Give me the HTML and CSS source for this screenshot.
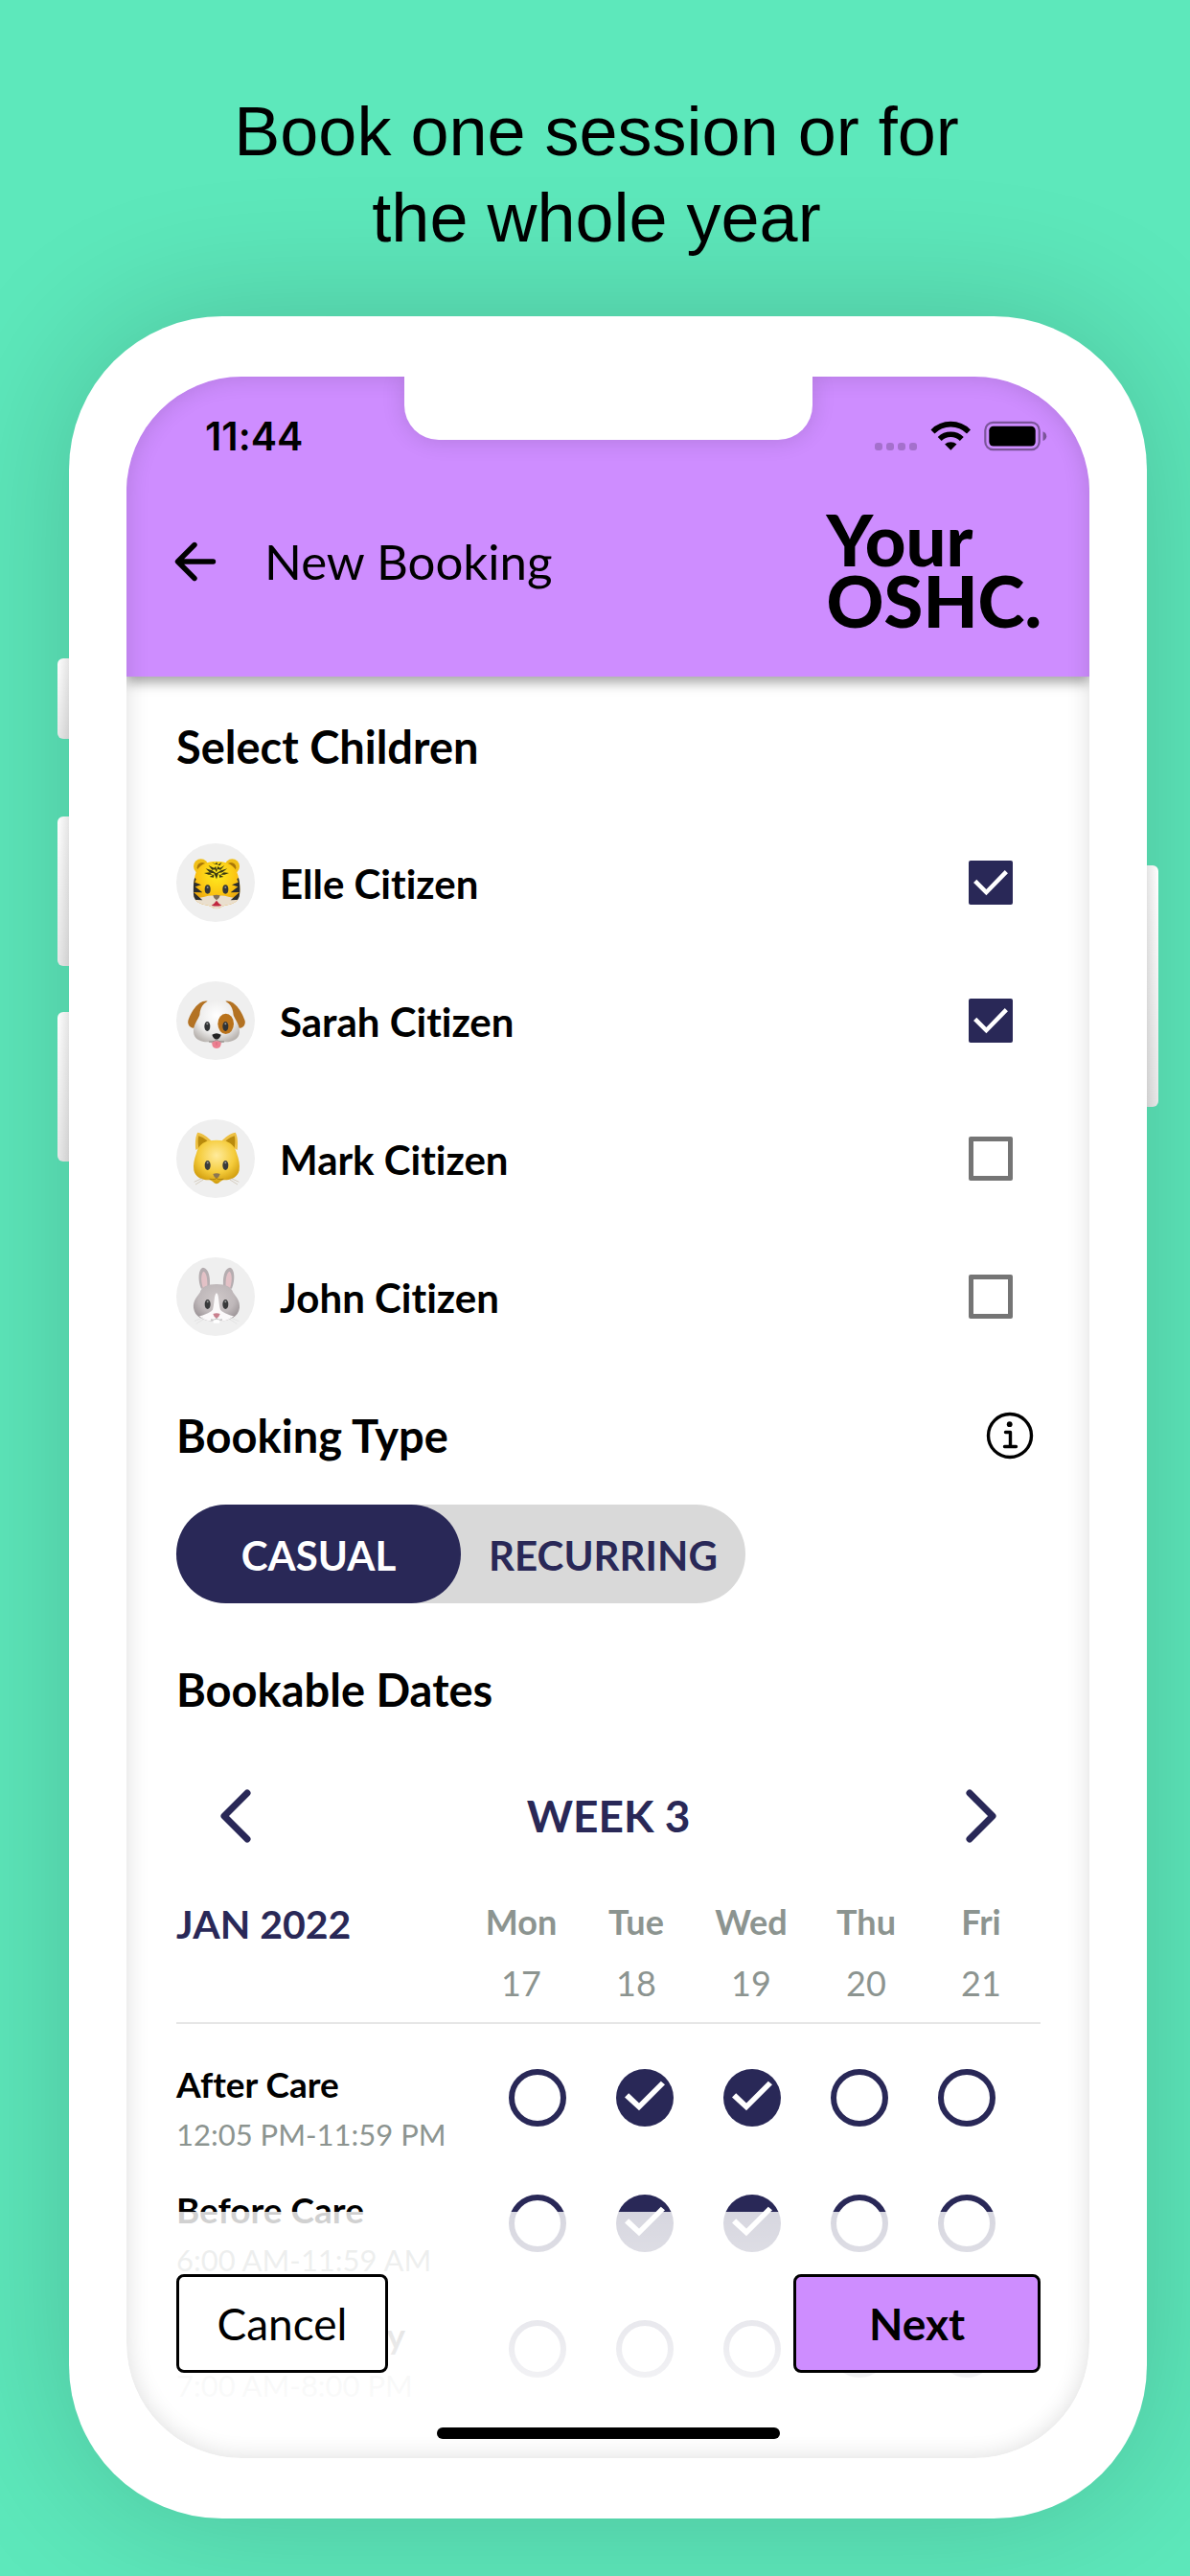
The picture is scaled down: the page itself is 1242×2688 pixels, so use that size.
FILE: index.html
```html
<!DOCTYPE html>
<html lang="en">
<head>
<meta charset="utf-8">
<meta name="viewport" content="width=device-width, initial-scale=1">
<title>New Booking</title>
<link rel="stylesheet" href="styles.css">
</head>
<body>
<h1 class="caption">Book one session or for<br>the whole year</h1>

<div class="phone">
  <span class="side-key side-key-mute"></span>
  <span class="side-key side-key-up"></span>
  <span class="side-key side-key-down"></span>
  <span class="side-key side-key-power"></span>

  <div class="screen">
    <header class="header">
      <div class="status-bar">
        <span class="clock">11:44</span>
        <svg class="status-icons" width="180" height="34" viewBox="0 0 180 34" aria-hidden="true">
          <g fill="#000" fill-opacity=".2">
            <rect x="0" y="24" width="8" height="8" rx="3"/>
            <rect x="12" y="24" width="8" height="8" rx="3"/>
            <rect x="24" y="24" width="8" height="8" rx="3"/>
            <rect x="36" y="24" width="8" height="8" rx="3"/>
          </g>
          <g fill="none" stroke="#000" stroke-width="5.6">
            <path d="M60.500 12.400a26.500 26.500 0 0 1 37.500 0"/>
            <path d="M67.700 20a16.600 16.600 0 0 1 23.100 0"/>
          </g>
          <path d="M79.300 31.800l-6.200-6.200a9.200 9.200 0 0 1 12.400 0z"/>
          <rect x="115.300" y="2.900" width="56.400" height="28.200" rx="8" fill="none" stroke="#000" stroke-opacity=".4" stroke-width="2.200"/>
          <rect x="119.300" y="6.700" width="48.400" height="20.800" rx="4.500"/>
          <path d="M175.500 12.300c5 2 5 8 0 9.800z" fill-opacity=".4"/>
        </svg>
        <span class="notch"></span>
      </div>
      <div class="app-bar">
        <button class="icon-button back" type="button" aria-label="Back">
          <svg width="44" height="42" viewBox="0 0 44 42" fill="none" stroke="#000" stroke-width="5.400" stroke-linecap="round" stroke-linejoin="round"><path d="M40.500 21H4M21 3.500L3.500 21L21 38.500"/></svg>
        </button>
        <h2 class="app-title">New Booking</h2>
        <div class="logo">Your<br>OSHC.</div>
      </div>
    </header>

    <main class="content">
      <h3 class="section-title">Select Children</h3>
      <ul class="children">
        <li><label class="child">
          <svg class="avatar" viewBox="0 0 246 246" aria-hidden="true">
            <defs>
              <radialGradient id="tiger" cx=".5" cy=".3" r=".65"><stop offset="0" stop-color="#ffee20"/><stop offset=".6" stop-color="#fbc312"/><stop offset="1" stop-color="#e0960c"/></radialGradient>
              <clipPath id="tigerHead"><path d="M126 56C98 56 66 66 59 100C54 122 52 142 54 160C56 184 78 192 99 194C112 197 116 205 126 205C136 205 140 197 153 194C174 192 196 184 198 160C202 142 198 122 193 100C186 66 154 56 126 56Z"/></clipPath>
            </defs>
            <circle cx="123" cy="123" r="123" fill="#efefef"/>
            <circle cx="77" cy="72" r="23" fill="#f0bf18"/><circle cx="175" cy="72" r="23" fill="#f0bf18"/>
            <circle cx="81" cy="76" r="16" fill="#a87708"/><circle cx="171" cy="76" r="16" fill="#a87708"/>
            <g clip-path="url(#tigerHead)">
              <rect x="48" y="50" width="158" height="160" fill="url(#tiger)"/>
              <path d="M48 168C78 178 99 157 126 166C153 157 174 178 204 168V210H48Z" fill="#eadfce"/>
              <path d="M48 100L62 112L58 122L78 130L59 136L82 154L54 153L82 178L48 176ZM204 100L190 112L194 122L174 130L193 136L170 154L198 153L170 178L204 176Z" fill="#2b2c2d"/>
            </g>
            <path d="M110 59L123 67L126 58L130 67L143 59L136 70ZM101 69L118 77L124 72L126 83L130 72L137 77L151 69L139 83L129 81L126 91L121 82L112 83ZM92 79L112 85L125 94L140 85L160 79L144 91L132 93L126 112L118 94L106 92ZM87 93L103 91L114 98L101 98ZM165 93L149 91L138 98L151 98ZM104 105L118 97L117 107ZM148 105L134 97L135 107Z" fill="#3a3913"/>
            <ellipse cx="98" cy="144" rx="9" ry="14" fill="#343638"/><ellipse cx="154" cy="144" rx="9" ry="14" fill="#343638"/>
            <circle cx="98" cy="138" r="3" fill="#8c8e90"/><circle cx="154" cy="138" r="3" fill="#8c8e90"/>
            <path d="M115 163Q126 160 137 163Q136 172 126 178Q116 172 115 163Z" fill="#84705c"/>
            <path d="M110 194Q120 188 126 179Q132 188 142 194Q126 199 110 194Z" fill="#c1273f"/>
          </svg>
          <span class="child-name">Elle Citizen</span>
          <input class="box" type="checkbox" checked>
        </label></li>
        <li><label class="child">
          <svg class="avatar" viewBox="0 0 246 246" aria-hidden="true">
            <defs><radialGradient id="dog" cx=".5" cy=".35" r=".65"><stop offset="0" stop-color="#fff"/><stop offset=".65" stop-color="#ebeae9"/><stop offset="1" stop-color="#b9b4b0"/></radialGradient></defs>
            <circle cx="123" cy="123" r="123" fill="#efefef"/>
            <path d="M98 62C70 56 44 98 37 124C34 140 50 152 62 143C78 128 76 86 98 62Z" fill="#b37223"/>
            <path d="M154 62C182 56 208 98 215 124C218 140 202 152 190 143C174 128 176 86 154 62Z" fill="#b37223"/>
            <path d="M126 58C92 58 75 74 73 106C68 120 52 138 54 160C56 184 80 191 101 190Q114 196 126 196Q138 196 151 190C172 191 196 184 198 160C200 138 184 120 179 106C177 74 160 58 126 58Z" fill="url(#dog)"/>
            <ellipse cx="155" cy="133" rx="25" ry="32" fill="#b9721b"/>
            <ellipse cx="97" cy="141" rx="9" ry="15" fill="#303234"/><ellipse cx="154" cy="141" rx="9" ry="15" fill="#303234"/>
            <circle cx="97" cy="133" r="3" fill="#999"/><circle cx="154" cy="133" r="3" fill="#999"/>
            <path d="M112 167Q126 158 140 167Q136 180 126 182Q116 180 112 167Z" fill="#222"/>
            <path d="M102 189Q124 190 126 181Q128 190 150 189" fill="none" stroke="#8b8682" stroke-width="3"/>
            <path d="M112 191Q126 183 140 191Q142 209 126 210Q110 209 112 191Z" fill="#ec7f90"/>
            <path d="M126 190V200" stroke="#cb5d72" stroke-width="2"/>
          </svg>
          <span class="child-name">Sarah Citizen</span>
          <input class="box" type="checkbox" checked>
        </label></li>
        <li><label class="child">
          <svg class="avatar" viewBox="0 0 246 246" aria-hidden="true">
            <defs><radialGradient id="cat" cx=".5" cy=".35" r=".65"><stop offset="0" stop-color="#ffeb9c"/><stop offset=".6" stop-color="#f5cc3b"/><stop offset="1" stop-color="#cf9a0b"/></radialGradient></defs>
            <circle cx="123" cy="123" r="123" fill="#efefef"/>
            <path d="M61 96C58 70 61 50 67 41C84 44 100 57 110 68ZM191 96C194 70 191 50 185 41C168 44 152 57 142 68Z" fill="#edc043"/>
            <path d="M70 91Q66 66 70 52Q87 57 97 67ZM182 91Q186 66 182 52Q165 57 155 67Z" fill="#b98a0d"/>
            <path d="M126 65C91 65 70 76 63 106C56 126 52 142 55 160C60 182 82 191 104 190C114 192 119 202 126 202C133 202 138 192 148 190C170 191 192 182 197 160C200 142 196 126 189 106C182 76 161 65 126 65Z" fill="url(#cat)"/>
            <ellipse cx="98" cy="144" rx="9" ry="15" fill="#3a3b3a"/><ellipse cx="154" cy="144" rx="9" ry="15" fill="#3a3b3a"/>
            <circle cx="98" cy="136" r="3" fill="#999"/><circle cx="154" cy="136" r="3" fill="#999"/>
            <path d="M115 171Q126 167 137 171Q135 181 126 185Q117 181 115 171Z" fill="#8b7653"/>
            <path d="M104 187Q122 190 126 184Q130 190 148 187" fill="none" stroke="#a97c0c" stroke-width="3"/>
            <path d="M82 184L56 196M84 189L60 204M170 184L196 196M168 189L192 204" stroke="#b9a98c" stroke-width="1.500"/>
          </svg>
          <span class="child-name">Mark Citizen</span>
          <input class="box" type="checkbox">
        </label></li>
        <li><label class="child">
          <svg class="avatar" viewBox="0 0 246 246" aria-hidden="true">
            <defs><radialGradient id="rabbit" cx=".5" cy=".4" r=".65"><stop offset="0" stop-color="#cfc8c9"/><stop offset=".6" stop-color="#bfb8ba"/><stop offset="1" stop-color="#978f92"/></radialGradient></defs>
            <circle cx="123" cy="123" r="123" fill="#efefef"/>
            <path d="M78 98C66 68 70 34 84 32C102 34 108 66 104 94ZM174 98C186 68 182 34 168 32C150 34 144 66 148 94Z" fill="#b5adb0"/>
            <path d="M84 98C74 66 80 46 86 44C96 50 98 72 97 94ZM168 98C178 66 172 46 166 44C156 50 154 72 155 94Z" fill="#e3c1c6"/>
            <path d="M126 84C98 84 80 92 74 110C64 124 52 136 54 158C58 186 84 200 126 200C168 200 194 186 198 158C200 136 188 124 178 110C172 92 154 84 126 84Z" fill="url(#rabbit)"/>
            <path d="M126 112C134 116 132 144 138 164C150 176 166 180 180 184C166 198 150 201 126 201C102 201 86 198 72 184C86 180 102 176 114 164C120 144 118 116 126 112Z" fill="#fbf9fa"/>
            <ellipse cx="98" cy="147" rx="9" ry="15" fill="#38393a"/><ellipse cx="154" cy="147" rx="9" ry="15" fill="#38393a"/>
            <circle cx="98" cy="139" r="3" fill="#999"/><circle cx="154" cy="139" r="3" fill="#999"/>
            <path d="M115 177Q126 172 137 177Q134 188 126 191Q118 188 115 177Z" fill="#c9808e"/>
            <path d="M108 195Q124 198 126 190Q128 198 144 195" fill="none" stroke="#aaa" stroke-width="3"/>
            <rect x="116" y="196" width="20" height="10" rx="3" fill="#fff"/>
            <path d="M84 188L56 200M88 192L62 208M168 188L196 200M164 192L190 208" stroke="#ddd" stroke-width="2"/>
          </svg>
          <span class="child-name">John Citizen</span>
          <input class="box" type="checkbox">
        </label></li>
      </ul>

      <div class="section-row">
        <h3 class="section-title">Booking Type</h3>
        <button class="icon-button info" type="button" aria-label="About booking types">
          <svg width="50" height="50" viewBox="0 0 50 50" fill="none" stroke="#000" stroke-width="3.400"><circle cx="25" cy="25" r="22.500"/><circle cx="24.700" cy="13.200" r="2.900" fill="#000" stroke="none"/><path d="M20.500 21.500H25.500V36.500M19.500 36.500H31.500" stroke-linecap="round" stroke-linejoin="round"/></svg>
        </button>
      </div>
      <div class="toggle">
        <button class="toggle-option toggle-active" type="button" aria-pressed="true">CASUAL</button>
        <button class="toggle-option" type="button" aria-pressed="false">RECURRING</button>
      </div>

      <h3 class="section-title dates-title">Bookable Dates</h3>
      <div class="week-nav">
        <button class="icon-button" type="button" aria-label="Previous week">
          <svg width="32" height="56" viewBox="0 0 32 56" fill="none" stroke="#292857" stroke-width="7" stroke-linecap="round" stroke-linejoin="round"><path d="M28 4L4 28L28 52"/></svg>
        </button>
        <span class="week-label">WEEK 3</span>
        <button class="icon-button" type="button" aria-label="Next week">
          <svg width="32" height="56" viewBox="0 0 32 56" fill="none" stroke="#292857" stroke-width="7" stroke-linecap="round" stroke-linejoin="round"><path d="M4 4L28 28L4 52"/></svg>
        </button>
      </div>

      <table class="sessions">
        <thead>
          <tr>
            <th class="month" scope="col">JAN 2022</th>
            <th class="day" scope="col">Mon<span class="date">17</span></th>
            <th class="day" scope="col">Tue<span class="date">18</span></th>
            <th class="day" scope="col">Wed<span class="date">19</span></th>
            <th class="day" scope="col">Thu<span class="date">20</span></th>
            <th class="day" scope="col">Fri<span class="date">21</span></th>
          </tr>
        </thead>
        <tbody>
          <tr>
            <th class="session" scope="row">After Care<span class="hours">12:05 PM-11:59 PM</span></th>
            <td><input class="dot" type="checkbox" aria-label="After Care, Monday 17"></td>
            <td><input class="dot" type="checkbox" aria-label="After Care, Tuesday 18" checked></td>
            <td><input class="dot" type="checkbox" aria-label="After Care, Wednesday 19" checked></td>
            <td><input class="dot" type="checkbox" aria-label="After Care, Thursday 20"></td>
            <td><input class="dot" type="checkbox" aria-label="After Care, Friday 21"></td>
          </tr>
          <tr>
            <th class="session" scope="row">Before Care<span class="hours">6:00 AM-11:59 AM</span></th>
            <td><input class="dot" type="checkbox" aria-label="Before Care, Monday 17"></td>
            <td><input class="dot" type="checkbox" aria-label="Before Care, Tuesday 18" checked></td>
            <td><input class="dot" type="checkbox" aria-label="Before Care, Wednesday 19" checked></td>
            <td><input class="dot" type="checkbox" aria-label="Before Care, Thursday 20"></td>
            <td><input class="dot" type="checkbox" aria-label="Before Care, Friday 21"></td>
          </tr>
          <tr>
            <th class="session" scope="row">Pupil Free Day<span class="hours">7:00 AM-8:00 PM</span></th>
            <td><input class="dot" type="checkbox" aria-label="Pupil Free Day, Monday 17"></td>
            <td><input class="dot" type="checkbox" aria-label="Pupil Free Day, Tuesday 18"></td>
            <td><input class="dot" type="checkbox" aria-label="Pupil Free Day, Wednesday 19"></td>
            <td><input class="dot" type="checkbox" aria-label="Pupil Free Day, Thursday 20"></td>
            <td><input class="dot" type="checkbox" aria-label="Pupil Free Day, Friday 21"></td>
          </tr>
        </tbody>
      </table>
    </main>

    <footer class="actions">
      <div class="action-row">
        <button class="button button-cancel" type="button">Cancel</button>
        <button class="button button-next" type="button">Next</button>
      </div>
      <span class="home-indicator"></span>
    </footer>
  </div>
</div>
</body>
</html>
```
FILE: styles.css
```css
* {
  box-sizing: border-box;
}

body {
  margin: 0;
  padding: 92px 45px 60px 72px;
  background: #5de8bb;
  color: #000;
  font-family: Lato, "Open Sans", sans-serif;
  font-variant-ligatures: none;
  overflow-x: hidden;
}

h1, h2, h3, ul {
  margin: 0;
  padding: 0;
  font-weight: 400;
}

button {
  border: 0;
  padding: 0;
  background: none;
  color: inherit;
  font-family: inherit;
  cursor: pointer;
}

svg {
  display: block;
}

.caption {
  position: relative;
  z-index: 1;
  margin: 0 0 58px;
  padding-right: 24px;
  font-family: "Liberation Sans", Arial, sans-serif;
  font-size: 72px;
  line-height: 90px;
  text-align: center;
}

/* Device frame */
.phone {
  position: relative;
  padding: 63px 60px;
  border-radius: 160px;
  background: #fff;
  box-shadow: 0 0 150px rgba(0, 0, 0, 0.18);
}

.side-key {
  position: absolute;
  left: -12px;
  width: 12px;
  border-radius: 6px 0 0 6px;
  background:
    linear-gradient(to left, rgba(0, 0, 0, 0.1), rgba(0, 0, 0, 0)),
    linear-gradient(#fff, #e8e8e8);
}

.side-key-mute {
  top: 357px;
  height: 84px;
}

.side-key-up {
  top: 522px;
  height: 156px;
}

.side-key-down {
  top: 726px;
  height: 156px;
}

.side-key-power {
  top: 573px;
  right: -12px;
  left: auto;
  height: 252px;
  border-radius: 0 6px 6px 0;
  background:
    linear-gradient(to right, rgba(0, 0, 0, 0.1), rgba(0, 0, 0, 0)),
    linear-gradient(#fff, #e8e8e8);
}

.screen {
  position: relative;
  overflow: hidden;
  border-radius: 120px;
  background: #fff;
}

.screen::after {
  content: "";
  position: absolute;
  inset: 0;
  z-index: 2;
  border-radius: 120px;
  box-shadow: inset 0 0 24px rgba(0, 0, 0, 0.14);
  pointer-events: none;
}

/* Header */
.header {
  position: relative;
  background: #ce8dff;
  box-shadow: 0 6px 12px rgba(0, 0, 0, 0.36);
}

.status-bar {
  display: flex;
  align-items: center;
  justify-content: space-between;
  height: 124px;
  padding: 0 44px 0 82px;
}

.clock {
  font-family: Inter, sans-serif;
  font-size: 41px;
  font-weight: 600;
}

.notch {
  position: absolute;
  top: 0;
  right: 0;
  left: 0;
  z-index: 3;
  width: 426px;
  height: 66px;
  margin: 0 auto;
  border-radius: 0 0 36px 36px;
  background: #fff;
  box-shadow: 0 0 24px rgba(0, 0, 0, 0.14);
}

.app-bar {
  display: flex;
  align-items: flex-start;
  height: 189px;
  padding: 14px 50px 0 50px;
}

.icon-button {
  display: flex;
  align-items: center;
  justify-content: center;
}

.back {
  height: 110px;
}

.app-title {
  flex: 1;
  padding-left: 50px;
  font-size: 51px;
  line-height: 110px;
}

.logo {
  font-size: 74px;
  font-weight: 900;
  line-height: 64px;
}

/* Content */
.content {
  padding: 45px 51px 49px 52px;
}

.section-title {
  font-size: 47px;
  font-weight: 700;
  line-height: 56px;
}

.children {
  padding: 42px 0 45px;
  list-style: none;
}

.child {
  display: flex;
  align-items: center;
  height: 144px;
  padding-right: 29px;
}

.avatar {
  width: 82px;
  height: 82px;
}

.child-name {
  flex: 1;
  padding: 2px 0 0 26px;
  font-size: 42px;
  font-weight: 700;
}

.box,
.dot {
  position: relative;
  display: block;
  margin: 0;
  appearance: none;
}

.box {
  width: 46px;
  height: 46px;
  border: 5px solid #757575;
  border-radius: 2px;
}

.box:checked,
.dot:checked {
  border: 0;
  background: #292857;
}

.box:checked::before,
.dot:checked::before {
  content: "";
  display: block;
  height: 100%;
  background: #fff;
}

.box:checked::before {
  clip-path: polygon(11% 50%, 18% 43%, 40% 65%, 82% 22%, 89% 29%, 40% 79%);
}

.section-row {
  display: flex;
  align-items: center;
  justify-content: space-between;
  padding-right: 7px;
}

.toggle {
  display: grid;
  grid-template-columns: 1fr 1fr;
  width: 594px;
  margin-top: 44px;
  border-radius: 52px;
  background: #d9d9d9;
}

.toggle-option {
  height: 103px;
  padding-top: 2px;
  border-radius: 52px;
  color: #292857;
  font-size: 42px;
  font-weight: 700;
}

.toggle-active {
  background: #292857;
  color: #fff;
}

.dates-title {
  margin-top: 62px;
}

.week-nav {
  display: flex;
  align-items: center;
  justify-content: space-between;
  margin-top: 76px;
  padding: 0 46px;
}

.week-label {
  color: #292857;
  font-size: 46px;
  font-weight: 700;
  line-height: 56px;
}

/* Session table */
.sessions,
.sessions thead,
.sessions tbody {
  display: block;
}

.sessions {
  margin-top: 50px;
}

.sessions thead {
  padding: 0 2px 9px 0;
  border-bottom: 2px solid #e6e6e6;
}

.sessions tbody {
  padding: 11px 21px 0 0;
}

.sessions tr {
  display: grid;
  grid-template-columns: 1fr repeat(5, 112px);
  align-items: center;
  height: 131px;
}

.sessions thead tr {
  grid-template-columns: 1fr repeat(5, 120px);
  align-items: start;
  height: auto;
}

.sessions th,
.sessions td {
  padding: 0;
}

.month {
  color: #292857;
  font-size: 41px;
  line-height: 70px;
  text-align: left;
}

.day {
  color: #8c9490;
  font-size: 36px;
  line-height: 64px;
}

.date,
.hours {
  display: block;
  color: #8c9490;
  font-weight: 400;
}

.sessions .session {
  padding-top: 26px;
  font-size: 37px;
  line-height: 50px;
  text-align: left;
}

.hours {
  font-size: 31px;
  line-height: 54px;
}

.dot {
  width: 60px;
  height: 60px;
  margin: 0 auto;
  border: 6px solid #292857;
  border-radius: 50%;
}

.dot:checked::before {
  clip-path: polygon(15% 50%, 22% 43%, 40% 60%, 78% 22%, 85% 28%, 40% 73%);
}

/* Bottom actions float over the scrolled list */
.actions {
  position: absolute;
  right: 0;
  bottom: 0;
  left: 0;
  z-index: 1;
  padding: 65px 51px 20px 52px;
  background: linear-gradient(rgba(255, 255, 255, 0.81), #fff);
}

.action-row {
  display: flex;
  justify-content: space-between;
}

.button {
  height: 103px;
  border: 3px solid #000;
  border-radius: 8px;
  font-size: 46px;
}

.button-cancel {
  width: 221px;
  background: #fff;
}

.button-next {
  width: 258px;
  background: #ce8dff;
  font-weight: 700;
}

.home-indicator {
  display: block;
  width: 358px;
  height: 12px;
  margin: 57px auto 0;
  border-radius: 6px;
  background: #000;
}
```
